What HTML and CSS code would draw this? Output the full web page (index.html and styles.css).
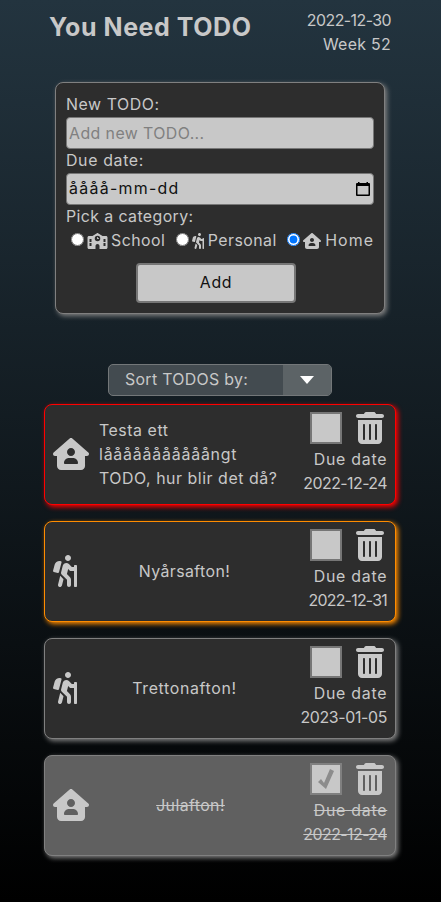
FILE: index.html
```html
<!DOCTYPE html>
<html lang="sv">
<head>
<meta charset="utf-8">
<meta name="viewport" content="width=device-width, initial-scale=1">
<title>You Need TODO</title>
<link rel="stylesheet" href="styles.css">
</head>
<body>
<svg class="sprite" aria-hidden="true">
  <symbol id="house" viewBox="0 0 576 512"><path fill-rule="evenodd" d="M575.8 255.5C575.8 273.5 560.8 287.6 543.8 287.6H511.8L512.5 447.7C512.5 483 483.8 511.9 448.5 511.9H128.1C92.75 511.9 64.09 483.3 64.09 447.9V287.6H32.05C14.02 287.6 0 273.5 0 255.5C0 246.5 3 238.5 10 231.5L266.4 8C273.4 1 281.4 0 288.4 0C295.4 0 303.4 2 309.5 7L564.8 231.5C572.8 238.5 576.9 246.5 575.8 255.5zM288 160C252.7 160 224 188.7 224 224C224 259.3 252.7 288 288 288C323.3 288 352 259.3 352 224C352 188.7 323.3 160 288 160zM256 320C211.8 320 176 355.8 176 400C176 408.8 183.2 416 192 416H384C392.8 416 400 408.8 400 400C400 355.8 364.2 320 320 320H256z"/></symbol>
  <symbol id="hiker" viewBox="0 0 384 512"><path d="M240 96c26.5 0 48-21.5 48-48S266.5 0 240 0S192 21.5 192 48S213.5 96 240 96zM80 288c7.3 0 14-4.8 15.9-11.9L137 117c.3-1.3 .5-2.6 .5-3.9c0-7-5-13.4-12.4-15.1C118.4 96.4 111.7 95.6 105.1 95.6c-36.7 0-70 23.8-79.3 59.5L.5 253.3C.2 254.6 0 255.9 0 257.2c0 7 5 13.4 12.4 15.1L76 287.5C77.4 287.8 78.7 288 80 288zM368 160h-16c-8.9 0-16 7.1-16 16V192h-34.8l-46.8-46.8C243.4 134.1 228.6 128 212.9 128C185.9 128 162.5 146.3 155.9 172.5L129 280.3C128.4 282.8 128 285.5 128 288.1c0 8.3 3.3 16.4 9.4 22.5l86.6 86.6V480c0 17.6 14.4 32 32 32s32-14.4 32-32v-82.8c0-17.1-6.6-33.1-18.8-45.2l-46.9-46.9c.3-.5 .5-.9 .6-1.4l20-79.5l22.4 22.4C271.4 252.6 279.5 256 288 256h48v240c0 8.9 7.1 16 16 16h16C376.9 512 384 504.9 384 496v-320C384 167.1 376.9 160 368 160zM81 472.3c-.7 2.6-1 5.3-1 7.9c0 14.3 9.7 27.3 24.2 30.9C106.9 511.8 109.5 512 112 512c14.4 0 27.4-9.8 31-24.3l25.3-101l-52.8-52.8L81 472.3z"/></symbol>
  <symbol id="school" viewBox="0 0 640 512"><path fill-rule="evenodd" d="M320 0C314 0 307 2 302 5L160 96H48C21 96 0 117 0 144V464C0 491 21 512 48 512H256V416C256 381 285 352 320 352S384 381 384 416V512H592C619 512 640 491 640 464V144C640 117 619 96 592 96H480L338 5C333 2 326 0 320 0zM64 192H128V288H64zM512 192H576V288H512zM64 320H128V416H64zM512 320H576V416H512zM320 88A88 88 0 1 1 320 264A88 88 0 1 1 320 88zM320 128C311 128 304 135 304 144V176C304 185 311 192 320 192H352C361 192 368 185 368 176S361 160 352 160H336V144C336 135 329 128 320 128z"/></symbol>
  <symbol id="trash" viewBox="0 0 448 512"><path fill-rule="evenodd" d="M135.2 17.7C140.6 6.8 151.7 0 163.8 0H284.2C296.3 0 307.4 6.8 312.8 17.7L320 32H416C433.7 32 448 46.3 448 64S433.7 96 416 96H32C14.3 96 0 81.7 0 64S14.3 32 32 32H128zM32 128H416V448C416 483.3 387.3 512 352 512H96C60.7 512 32 483.3 32 448zM112 208V432C112 440.8 119.2 448 128 448S144 440.8 144 432V208C144 199.2 136.8 192 128 192S112 199.2 112 208zM208 208V432C208 440.8 215.2 448 224 448S240 440.8 240 432V208C240 199.2 232.8 192 224 192S208 199.2 208 208zM304 208V432C304 440.8 311.2 448 320 448S336 440.8 336 432V208C336 199.2 328.8 192 320 192S304 199.2 304 208z"/></symbol>
</svg>

<header class="header">
  <h1 class="title">You Need TODO</h1>
  <div class="today"><div class="date">2022-12-30</div><div class="week">Week 52</div></div>
</header>

<main>
  <form class="form">
    <label class="label new-label" for="todo">New TODO:</label>
    <input class="field" id="todo" type="text" placeholder="Add new TODO...">
    <div class="label due-label">Due date:</div>
    <div class="field date-field">
      <span class="date-hint">åååå-mm-dd</span>
      <svg class="calendar" viewBox="0 0 14 15"><path fill-rule="evenodd" d="M2 0h1.500v1h7V0H12v1h1q1 0 1 1v11q0 1-1 1H1q-1 0-1-1V2q0-1 1-1h1zM1.500 4v8.500h11V4z"/></svg>
    </div>
    <div class="label pick-label">Pick a category:</div>
    <div class="categories">
      <label class="category"><input class="radio" type="radio" name="category"><svg class="mini school"><use href="#school"/></svg><span class="t-school">School</span></label>
      <label class="category"><input class="radio" type="radio" name="category"><svg class="mini hiker"><use href="#hiker"/></svg><span class="t-personal">Personal</span></label>
      <label class="category"><input class="radio" type="radio" name="category" checked><svg class="mini house"><use href="#house"/></svg><span class="t-home">Home</span></label>
    </div>
    <button class="add" type="button">Add</button>
  </form>

  <div class="sort"><span class="sort-label">Sort TODOS by:</span><span class="sort-toggle"><i class="arrow"></i></span></div>

  <ul class="list">
    <li class="card overdue">
      <svg class="icon house"><use href="#house"/></svg>
      <p class="text long">Testa ett<br><span class="stretched">lååååååååååångt</span><br>TODO, hur blir det då?</p>
      <div class="side">
        <div class="actions"><span class="check"></span><svg class="trash"><use href="#trash"/></svg></div>
        <div class="due">Due date</div><div class="date">2022-12-24</div>
      </div>
    </li>
    <li class="card soon">
      <svg class="icon hiker"><use href="#hiker"/></svg>
      <p class="text">Nyårsafton!</p>
      <div class="side">
        <div class="actions"><span class="check"></span><svg class="trash"><use href="#trash"/></svg></div>
        <div class="due">Due date</div><div class="date narrow">2022-12-31</div>
      </div>
    </li>
    <li class="card">
      <svg class="icon hiker"><use href="#hiker"/></svg>
      <p class="text airy">Trettonafton!</p>
      <div class="side">
        <div class="actions"><span class="check"></span><svg class="trash"><use href="#trash"/></svg></div>
        <div class="due">Due date</div><div class="date wide">2023-01-05</div>
      </div>
    </li>
    <li class="card done">
      <svg class="icon house"><use href="#house"/></svg>
      <p class="text">Julafton!</p>
      <div class="side">
        <div class="actions"><span class="check"><svg class="tick" viewBox="0 0 16 20"><path d="M0 13L3 10L6 14L12 0L16 2L8 20z"/></svg></span><svg class="trash"><use href="#trash"/></svg></div>
        <div class="due">Due date</div><div class="date">2022-12-24</div>
      </div>
    </li>
  </ul>
</main>
</body>
</html>
```
FILE: styles.css
```css
* { box-sizing: border-box; }
html { background: #000; }
body {
  margin: 0;
  height: 902px;
  overflow: hidden;
  background: linear-gradient(#23343f, #000);
  color: #c8c8c8;
  font: 400 15.9px/24px Inter, "Liberation Sans", sans-serif;
}
svg { fill: currentColor; flex: none; }
.sprite { display: none; }

.header { display: flex; justify-content: space-between; height: 82px; padding: 9px 50px 0 49px; }
.title { margin: 1px 0 0; font-size: 25px; line-height: 34px; font-weight: 700; letter-spacing: .55px; white-space: nowrap; }
.today { text-align: right; }
.date { letter-spacing: -.54px; }
.date.narrow { letter-spacing: -.75px; }
.date.wide { letter-spacing: -.34px; }
.week { letter-spacing: .3px; }

.form {
  width: 330px;
  height: 232px;
  margin: 0 0 0 55px;
  padding: 10px 10px 0;
  background: #2d2d2d;
  border: 1px solid #808080;
  border-radius: 8px;
  box-shadow: 2px 2px 5px #808080;
}
.label { display: block; height: 24px; line-height: 24px; letter-spacing: .57px; }
.due-label { letter-spacing: .65px; }
.pick-label { letter-spacing: .4px; }
.field {
  display: block;
  width: 308px;
  height: 32px;
  padding: 0 2px;
  border: 1px solid #777;
  border-radius: 4px;
  background: #c8c8c8;
  color: #111;
  font: inherit;
  letter-spacing: .42px;
}
.field::placeholder { color: #808080; }
.date-field { display: flex; align-items: center; justify-content: space-between; padding-right: 3px; }
.date-hint { letter-spacing: 1.3px; }
.calendar { width: 14px; height: 15px; color: #000; }
.categories { display: flex; justify-content: space-between; height: 23px; padding: 0 1px 0 5px; }
.category { display: flex; align-items: center; white-space: nowrap; }
.radio { width: 13px; height: 13px; margin: 0 3px 2px 0; }
.t-school { letter-spacing: .45px; }
.t-personal { letter-spacing: .45px; }
.t-home { letter-spacing: 1.1px; margin-right: -1.1px; }
.mini { height: 16px; margin-right: 4px; }
.mini.school { width: 21px; margin-right: 3px; }
.mini.hiker { width: 12px; }
.mini.house { width: 18px; }
.add {
  display: block;
  width: 160px;
  height: 40px;
  margin: 11px 0 0 70px;
  padding: 0;
  border: 2px solid #767676;
  border-radius: 4px;
  background: #c8c8c8;
  color: #111;
  font: inherit;
  letter-spacing: .7px;
}

.sort {
  display: flex;
  width: 224px;
  height: 32px;
  margin: 50px 0 8px 108px;
  background: #434b50;
  border: 1px solid #737779;
  border-radius: 5px;
  line-height: 30px;
  letter-spacing: .32px;
  overflow: hidden;
}
.sort-label { flex: 1; padding-left: 16px; }
.sort-toggle { display: flex; align-items: center; justify-content: center; width: 48px; background: #5c6366; }
.arrow { border: 7px solid transparent; border-top: 8px solid #fff; border-bottom: 0; }

.list { display: flex; flex-direction: column; gap: 16px; margin: 0 0 0 44px; padding: 0; list-style: none; }
.card {
  --edge: #808080;
  display: flex;
  align-items: center;
  width: 352.4px;
  height: 101px;
  padding: 0 8.4px 0 8px;
  background: #2d2d2d;
  border: 1px solid var(--edge);
  border-radius: 8px;
  box-shadow: 2px 2px 5px var(--edge);
}
.overdue { --edge: #f00; }
.soon { --edge: #ff8c00; }
.done { background: #606060; text-decoration: line-through; }
.icon { height: 32px; margin-bottom: 1px; }
.icon.house { width: 36px; }
.icon.hiker { width: 24px; }
.text { flex: 1; margin: 0; text-align: center; letter-spacing: .4px; white-space: nowrap; }
.text.long { padding-left: 10px; text-align: left; letter-spacing: .54px; }
.text.airy { letter-spacing: .65px; }
.text .stretched { letter-spacing: .8px; }
.side { display: flex; flex-direction: column; align-items: flex-end; width: 95px; text-align: right; }
.due { margin-right: -.3px; letter-spacing: .75px; }
.actions { display: flex; gap: 14px; margin: -1px 3px 4px 0; }
.check { display: flex; align-items: center; justify-content: center; width: 32px; height: 32px; border: 2px solid #767676; background: #c8c8c8; }
.tick { width: 16px; height: 20px; color: #8c8c8c; }
.trash { width: 28px; height: 32px; }
.done .check { border-color: #808080; }
```
